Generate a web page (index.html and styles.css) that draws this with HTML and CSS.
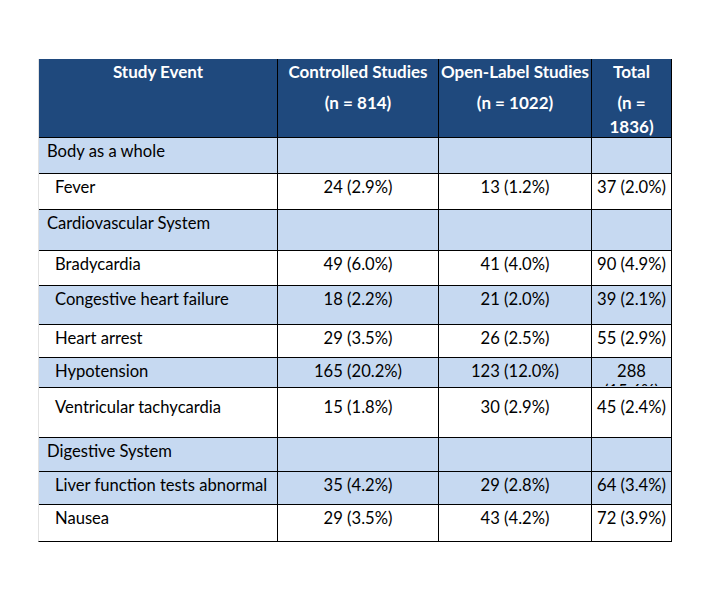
FILE: index.html
```html
<!DOCTYPE html>
<html lang="en">
<head>
<meta charset="utf-8">
<title>Study Events</title>
<link rel="stylesheet" href="styles.css">
</head>
<body>
<div class="page">
<table class="ae">
  <colgroup>
    <col class="c1"><col class="c2"><col class="c3"><col class="c4">
  </colgroup>
  <thead>
    <tr class="hd">
      <th><p>Study Event</p></th>
      <th><p>Controlled Studies</p><p class="sub">(n = 814)</p></th>
      <th><p>Open-Label Studies</p><p class="sub">(n = 1022)</p></th>
      <th><p>Total</p><p class="sub">(n =<br>1836)</p></th>
    </tr>
  </thead>
  <tbody>
    <tr class="blue h36"><td class="cat">Body as a whole</td><td></td><td></td><td></td></tr>
    <tr class="h36"><td class="item">Fever</td><td class="num">24 (2.9%)</td><td class="num">13 (1.2%)</td><td class="num">37 (2.0%)</td></tr>
    <tr class="blue h41"><td class="cat">Cardiovascular System</td><td></td><td></td><td></td></tr>
    <tr class="h35"><td class="item">Bradycardia</td><td class="num">49 (6.0%)</td><td class="num">41 (4.0%)</td><td class="num">90 (4.9%)</td></tr>
    <tr class="blue h39"><td class="item">Congestive heart failure</td><td class="num">18 (2.2%)</td><td class="num">21 (2.0%)</td><td class="num">39 (2.1%)</td></tr>
    <tr class="h33"><td class="item">Heart arrest</td><td class="num">29 (3.5%)</td><td class="num">26 (2.5%)</td><td class="num">55 (2.9%)</td></tr>
    <tr class="blue h30"><td class="item">Hypotension</td><td class="num">165 (20.2%)</td><td class="num">123 (12.0%)</td><td class="num wrap"><div class="clip">288 (15.6%)</div></td></tr>
    <tr class="h50 low"><td class="item">Ventricular tachycardia</td><td class="num">15 (1.8%)</td><td class="num">30 (2.9%)</td><td class="num">45 (2.4%)</td></tr>
    <tr class="blue h34"><td class="cat">Digestive System</td><td></td><td></td><td></td></tr>
    <tr class="blue h33"><td class="item">Liver function tests abnormal</td><td class="num">35 (4.2%)</td><td class="num">29 (2.8%)</td><td class="num">64 (3.4%)</td></tr>
    <tr class="h37"><td class="item">Nausea</td><td class="num">29 (3.5%)</td><td class="num">43 (4.2%)</td><td class="num">72 (3.9%)</td></tr>
  </tbody>
</table>
</div>
</body>
</html>
```
FILE: styles.css
```css
html, body {
  margin: 0;
  padding: 0;
  background: #ffffff;
}

.page {
  padding: 59px 0 0 38px;
}

.ae {
  border-collapse: separate;
  border-spacing: 0;
  table-layout: fixed;
  width: 634px;
  font-family: "Lato", "Open Sans", sans-serif;
  font-size: 16.6px;
  line-height: 20px;
  color: #000;
  border-left: 1px solid #e2e2e2;
  border-bottom: 1px solid #000;
}

.c1 { width: 239px; }
.c2 { width: 161px; }
.c3 { width: 153px; }
.c4 { width: 80px; }

.hd { height: 78px; }

.hd th {
  background: #1f497d;
  color: #fff;
  font-size: 17px;
  font-weight: 700;
  text-align: center;
  vertical-align: top;
  padding: 1px 1px 0;
  line-height: 24px;
  border-right: 1px solid #000;
}

.hd th p {
  margin: 0;
  white-space: nowrap;
}

.hd th p.sub {
  margin: 7px 0 -2px;
}

tbody td {
  vertical-align: top;
  padding: 3px 2px 0;
  border-top: 1px solid #000;
  border-right: 1px solid #000;
  background: #fff;
}

tbody tr.blue td {
  background: #c6d9f1;
}

tbody tr.low td {
  padding-top: 9px;
}

td.cat { padding-left: 8px; }
td.item { padding-left: 16px; white-space: nowrap; }

td.num {
  text-align: center;
  white-space: nowrap;
}

td.num.wrap { white-space: normal; }

.clip {
  height: 25px;
  overflow: hidden;
}

.h30 { height: 30px; }
.h33 { height: 33px; }
.h34 { height: 34px; }
.h35 { height: 35px; }
.h36 { height: 36px; }
.h37 { height: 37px; }
.h39 { height: 39px; }
.h41 { height: 41px; }
.h50 { height: 50px; }
```
